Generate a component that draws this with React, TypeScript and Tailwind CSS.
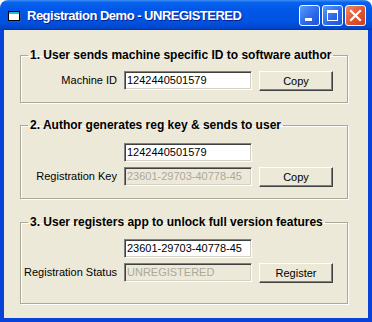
import type { ReactElement, ReactNode } from "react";

const font = "font-['Liberation_Sans',Arial,sans-serif]";

function TextBox({ value, disabled }: { value: string; disabled?: boolean }): ReactElement {
  return (
    <div
      className={`h-[19px] w-[128px] overflow-hidden whitespace-nowrap border border-t-[#808080] border-l-[#808080] border-r-white border-b-white shadow-[inset_1px_1px_0_#404040,inset_-1px_-1px_0_#d4d0c8] pl-[2px] text-[11px] leading-[17px] ${
        disabled ? "bg-[#ece9d8] text-[#aca899]" : "bg-white text-black"
      }`}
    >
      {value}
    </div>
  );
}

function Button({ children }: { children: ReactNode }): ReactElement {
  return (
    <button className="h-[20px] w-[74px] border border-t-white border-l-white border-r-[#404040] border-b-[#404040] bg-[#ece9d8] text-center text-[11px] leading-[17px] text-black shadow-[inset_-1px_-1px_0_#808080]">
      {children}
    </button>
  );
}

function GroupBox({
  title,
  className,
  children,
}: {
  title: string;
  className: string;
  children: ReactNode;
}): ReactElement {
  return (
    <fieldset
      className={`ml-[16px] w-[328px] border border-[#aca899] shadow-[inset_1px_1px_0_#fff,1px_1px_0_#fff] ${className}`}
    >
      <legend className="ml-[7px] whitespace-nowrap px-[2px] text-[12px] font-bold leading-[14px] text-black">
        {title}
      </legend>
      {children}
    </fieldset>
  );
}

function Label({ children }: { children: ReactNode }): ReactElement {
  return <span className="whitespace-nowrap text-right text-[11px] leading-[19px] text-black">{children}</span>;
}

export default function App(): ReactElement {
  return (
    <div className={`flex h-[322px] w-[372px] flex-col bg-white ${font}`}>
      {/* Title bar */}
      <div className="flex h-[30px] items-center rounded-t-[8px] bg-[linear-gradient(to_bottom,#3d8ef6_0%,#0a63ec_8%,#0058e8_30%,#0053e2_70%,#0048d0_92%,#0035b0_100%)] pl-[8px] pr-[6px]">
        <svg width="13" height="11" viewBox="0 0 13 11" className="mt-[2px] shrink-0">
          <rect x="1.5" y="1.5" width="11" height="9" fill="#606060" />
          <rect x="0.5" y="0.5" width="11" height="9" fill="#fff" stroke="#000" />
          <rect x="1" y="1" width="10" height="2" fill="#20c0c8" />
        </svg>
        <span className="ml-[6px] mt-[2px] text-[13px] font-bold tracking-[-0.5px] text-white [text-shadow:1px_1px_0_#0a1f8f]">
          Registration Demo - UNREGISTERED
        </span>
        <div className="ml-auto flex gap-[2px]">
          <div className="relative h-[21px] w-[21px] rounded-[3px] border border-white bg-[linear-gradient(135deg,#5b9bf8,#2a66e8_60%,#1d55d8)]">
            <div className="absolute left-[5px] top-[12px] h-[3px] w-[7px] bg-white" />
          </div>
          <div className="relative h-[21px] w-[21px] rounded-[3px] border border-white bg-[linear-gradient(135deg,#5b9bf8,#2a66e8_60%,#1d55d8)]">
            <div className="absolute left-[4px] top-[4px] h-[11px] w-[11px] border border-t-[3px] border-white" />
          </div>
          <div className="relative h-[21px] w-[21px] rounded-[3px] border border-white bg-[linear-gradient(135deg,#f08a6c,#e0532f_55%,#c8401e)]">
            <svg width="19" height="19" viewBox="0 0 19 19" className="absolute left-0 top-0">
              <path d="M5 5 L14 14 M14 5 L5 14" stroke="#fff" strokeWidth="2.2" strokeLinecap="square" />
            </svg>
          </div>
        </div>
      </div>

      {/* Client area */}
      <div className="flex-1 border-x-4 border-b-4 border-[#0842d8] bg-[#ece9d8] pt-[18px]">
        <GroupBox title="1. User sends machine specific ID to software author" className="pb-[11px]">
          <div className="grid grid-cols-[96px_128px_74px] items-start gap-x-[7px] pt-[9px]">
            <Label>Machine ID</Label>
            <TextBox value="1242440501579" />
            <Button>Copy</Button>
          </div>
        </GroupBox>

        <GroupBox title="2. Author generates reg key & sends to user" className="mt-[15px] pb-[11px]">
          <div className="grid grid-cols-[96px_128px_74px] items-start gap-x-[7px] gap-y-[5px] pt-[11px]">
            <div className="col-start-2">
              <TextBox value="1242440501579" />
            </div>
            <div />
            <Label>Registration Key</Label>
            <TextBox value="23601-29703-40778-45" disabled />
            <Button>Copy</Button>
          </div>
        </GroupBox>

        <GroupBox title="3. User registers app to unlock full version features" className="mt-[16px] pb-[20px]">
          <div className="grid grid-cols-[96px_128px_74px] items-start gap-x-[7px] gap-y-[5px] pt-[10px]">
            <div className="col-start-2">
              <TextBox value="23601-29703-40778-45" />
            </div>
            <div />
            <Label>Registration Status</Label>
            <TextBox value="UNREGISTERED" disabled />
            <Button>Register</Button>
          </div>
        </GroupBox>
      </div>
    </div>
  );
}
